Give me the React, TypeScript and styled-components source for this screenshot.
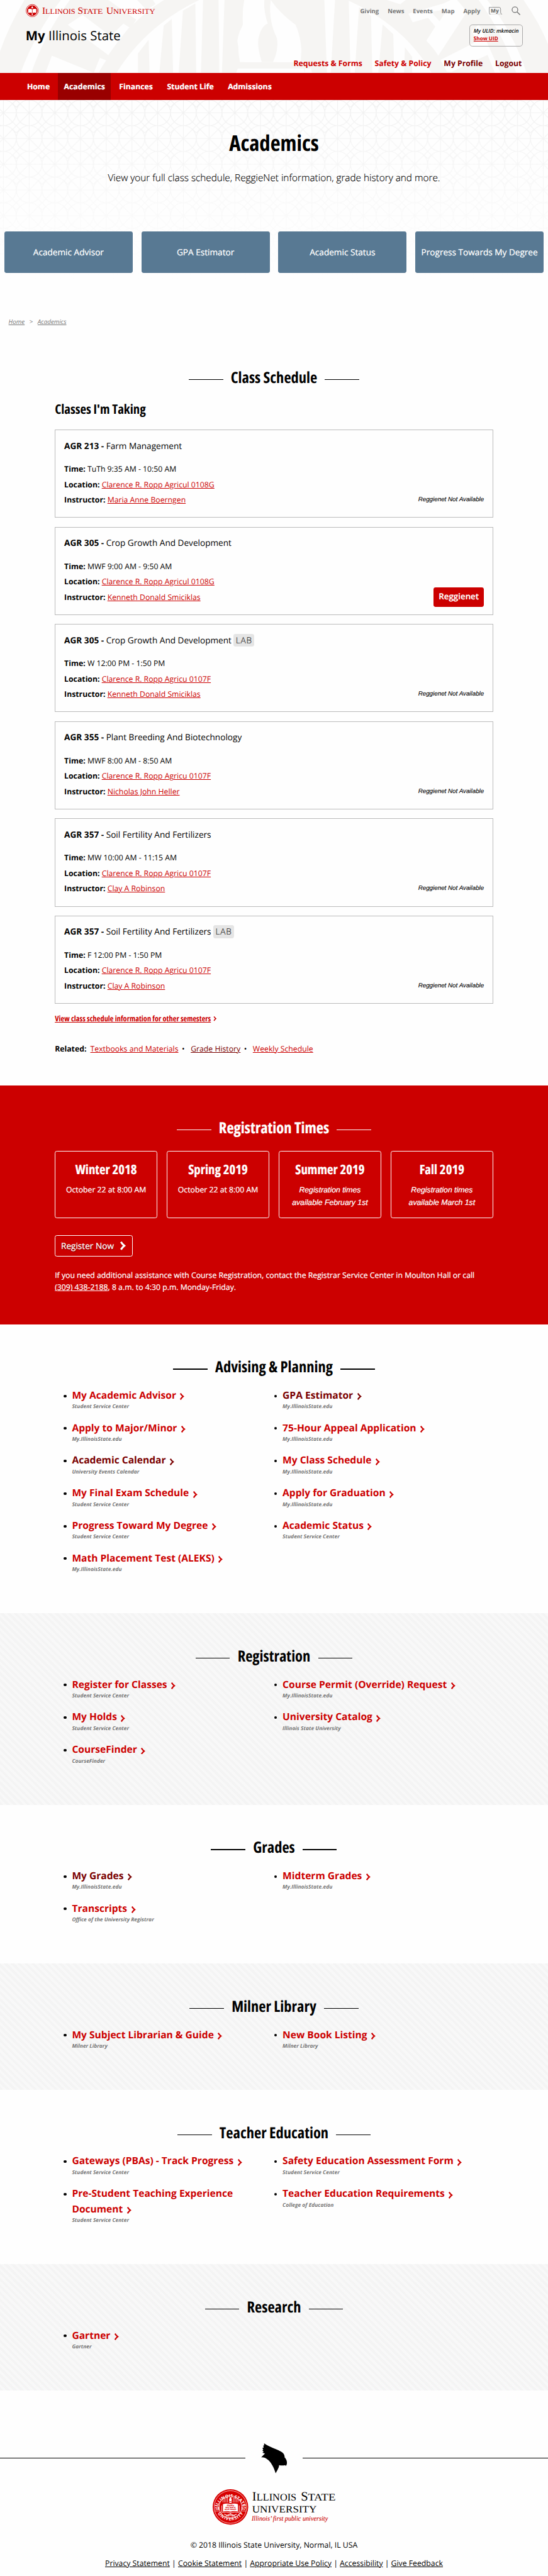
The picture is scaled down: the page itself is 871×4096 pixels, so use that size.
import React from "react";
import styled, { createGlobalStyle, css } from "styled-components";

const RED = "#cc0000";
const VISITED = "#7a0000";

const GlobalStyle = createGlobalStyle`
  html, body { margin: 0; padding: 0; background: #fefefe; }
  body { overflow: hidden; }
  * { box-sizing: border-box; }
`;

/* The page is designed on a 1279px grid and shown at a reduced zoom. */
const Page = styled.div`
  zoom: 0.681;
  width: 1279px;
  height: 6014px;
  overflow: hidden;
  background: #fefefe;
  color: #000;
  font-family: "Open Sans", "Liberation Sans", sans-serif;
  font-size: 18px;
  text-rendering: geometricPrecision;
`;

const condensed = css`
  font-weight: 700;
  font-stretch: 75%;
`;

/* Light text on a dark ground is thickened slightly. */
const onDark = css`
  -webkit-text-stroke: 0.35px currentColor;
`;

const Link = styled.a<{ $visited?: boolean }>`
  color: ${(p) => (p.$visited ? VISITED : RED)};
  text-decoration: underline;
  text-decoration-thickness: 1px;
  text-underline-offset: 2px;
`;

/* ---------- header ---------- */

const Header = styled.header`
  position: relative;
  height: 170px;
  padding: 0 59px 0 60px;
`;
const Backdrop = styled.svg`
  position: absolute;
  inset: 0;
  width: 1279px;
  height: 170px;
`;
const HeaderRow = styled.div<{ $h: number; $top?: number }>`
  position: relative;
  display: flex;
  align-items: center;
  justify-content: space-between;
  height: ${(p) => p.$h}px;
  padding-top: ${(p) => p.$top || 0}px;
`;
const UtilityNav = styled.nav`
  display: flex;
  align-items: center;
  gap: 20.5px;
  margin-right: 5px;
  font-size: 14px;
  font-weight: 700;
  color: #777;
`;
const SiteName = styled.div`
  font-size: 30px;
  line-height: 40px;
  b { font-weight: 700; }
`;
const UlidBox = styled.div`
  width: 124px;
  height: 50px;
  padding: 5px 0 0 8px;
  border: 1px solid #aaa;
  border-radius: 7px;
  font-size: 12.4px;
  line-height: 18px;
  font-weight: 600;
  white-space: nowrap;
  em { display: block; }
  a { font-weight: 700; font-size: 12px; }
`;
const AccountNav = styled.nav`
  display: flex;
  gap: 29px;
  margin-left: auto;
  padding-right: 2px;
  font-weight: 700;
  line-height: 24px;
`;
const AccountLink = styled.a<{ $visited?: boolean }>`
  color: ${(p) => (p.$visited ? VISITED : RED)};
`;
const MainNav = styled.nav`
  display: flex;
  gap: 5px;
  height: 63px;
  padding-left: 49px;
  background: ${RED};
`;
const MainNavItem = styled.a<{ $active?: boolean }>`
  ${onDark}
  display: flex;
  align-items: center;
  padding: 0 14px;
  background: ${(p) => (p.$active ? "#990000" : "transparent")};
  color: #fff;
  font-weight: 700;
`;

/* ---------- hero ---------- */

const Hero = styled.section`
  position: relative;
  height: 467px;
  padding: 71px 10px 0;
  text-align: center;
`;
const HeroPattern = styled.svg`
  position: absolute;
  inset: 0;
  width: 1279px;
  height: 467px;
`;
const HeroTitle = styled.h1`
  ${condensed}
  position: relative;
  margin: 0;
  font-size: 51px;
  line-height: 62px;
`;
const HeroText = styled.p`
  position: relative;
  margin: 35px 0 110px;
  font-size: 22.5px;
  line-height: 30px;
  font-weight: 300;
  -webkit-text-stroke: 0.2px currentColor;
`;
const QuickLinks = styled.div`
  position: relative;
  display: grid;
  grid-template-columns: repeat(4, 1fr);
  gap: 20px;
`;
const QuickLink = styled.a`
  ${onDark}
  display: flex;
  align-items: center;
  justify-content: center;
  height: 96px;
  padding-bottom: 3px;
  border-radius: 5px;
  background: #587993;
  color: #fff;
  font-size: 20px;
  white-space: nowrap;
`;
const Breadcrumb = styled.div`
  display: flex;
  gap: 11px;
  padding: 41px 20px 0;
  color: #777;
  font-size: 14.4px;
  line-height: 20px;
  a { font-style: italic; text-decoration: underline; text-decoration-thickness: 1px; }
`;

/* ---------- shared ---------- */

const Heading = styled.h2`
  ${condensed}
  display: flex;
  align-items: center;
  justify-content: center;
  gap: 18px;
  margin: 0;
  font-size: 36px;
  line-height: 44px;
  &::before, &::after {
    content: "";
    width: 80px;
    height: 2px;
    margin-top: 8px;
    background: currentColor;
  }
`;

/* ---------- schedule ---------- */

const Schedule = styled.section`
  padding: 99px 128px 72px;
`;
const SubHeading = styled.h3`
  ${condensed}
  margin: 33px 0 26px;
  font-size: 30.6px;
  line-height: 40px;
`;
const CardList = styled.div`
  display: flex;
  flex-direction: column;
  gap: 21px;
`;
const Card = styled.article`
  height: 206px;
  padding: 18.5px 20px 0 20.5px;
  border: 1px solid #bbb;
`;
const CardTitle = styled.div`
  font-size: 20px;
  line-height: 36px;
  margin-bottom: 19px;
`;
const Tag = styled.span`
  display: inline-block;
  margin-left: 5px;
  padding: 0 5px;
  border-radius: 5px;
  background: #e5e5e5;
  color: #222;
  font-weight: 300;
  letter-spacing: 1.2px;
  line-height: 30px;
  -webkit-text-stroke: 0.2px currentColor;
`;
const CardBody = styled.div`
  display: flex;
  align-items: flex-end;
  justify-content: space-between;
  line-height: 36px;
`;
const NotAvailable = styled.em`
  font-family: "Liberation Sans", sans-serif;
  font-size: 14.4px;
  -webkit-text-stroke: 0.15px currentColor;
`;
const ReggienetButton = styled.a`
  ${onDark}
  margin-bottom: -4px;
  padding: 0 12px;
  height: 45px;
  line-height: 42px;
  border-radius: 5px;
  background: ${RED};
  color: #fff;
  font-size: 19.6px;
  font-weight: 600;
`;
const OtherSemesters = styled.a`
  ${condensed}
  display: flex;
  align-items: center;
  gap: 5px;
  margin-top: 23px;
  line-height: 24px;
  font-size: 18.2px;
  color: ${RED};
  span { text-decoration: underline; text-decoration-thickness: 1.5px; }
`;
const Related = styled.div`
  margin-top: 45px;
  line-height: 26px;
  white-space: pre;
  i { font-style: normal; margin: 0 14px 0 8px; }
  b { margin-right: 9px; }
`;

/* ---------- registration times ---------- */

const Times = styled.section`
  ${onDark}
  height: 558px;
  padding: 78px 128px 0;
  background: ${RED};
  color: #fff;
`;
const TermGrid = styled.div`
  display: grid;
  grid-template-columns: repeat(4, 1fr);
  gap: 22px;
  margin: 32px 0 40px;
`;
const Term = styled.div`
  height: 156px;
  padding: 22.5px 5px 0;
  border: 1px solid #fff;
  border-radius: 5px;
  text-align: center;
  line-height: 29.5px;
  em { font-family: "Liberation Sans", sans-serif; white-space: pre-line; }
`;
const TermTitle = styled.div`
  ${condensed}
  margin-bottom: 12px;
  font-size: 30.6px;
  line-height: 40px;
`;
const RegisterButton = styled.a`
  display: flex;
  align-items: center;
  justify-content: space-between;
  width: 182px;
  height: 50px;
  padding: 0 15px 0 13px;
  border: 2px solid #fff;
  border-radius: 5px;
  font-size: 20px;
  text-shadow: 1px 1px 2px rgba(0, 0, 0, 0.5);
  svg { filter: drop-shadow(1px 1px 1px rgba(0, 0, 0, 0.4)); }
`;
const Assistance = styled.p`
  margin: 30px 0 0;
  line-height: 28px;
  white-space: nowrap;
  u { text-decoration-thickness: 1px; }
`;

/* ---------- link lists ---------- */

const LinkSection = styled.section<{ $striped?: boolean }>`
  padding: 79px 128px 71.5px;
  ${(p) =>
    p.$striped &&
    css`
      background: repeating-linear-gradient(
        45deg,
        #f4f4f4 0,
        #f4f4f4 5.65px,
        #f8f8f8 5.65px,
        #f8f8f8 11.3px
      );
    `}
`;
const Columns = styled.div`
  display: grid;
  grid-template-columns: 491.5px 1fr;
  margin-top: 24.5px;
`;
const Item = styled.div`
  display: grid;
  grid-template-columns: 19px 1fr;
  padding: 0 30px 0 21px;
  margin-bottom: 20px;
`;
const Bullet = styled.span`
  width: 6px;
  height: 6px;
  margin-top: 17px;
  border-radius: 50%;
  background: #000;
`;
const ItemTitle = styled.a<{ $visited?: boolean }>`
  display: block;
  color: ${(p) => (p.$visited ? VISITED : RED)};
  font-size: 22.9px;
  line-height: 36px;
  font-weight: 700;
  svg { margin-left: 8px; vertical-align: -3.5px; }
`;
const ItemSource = styled.div`
  color: #777;
  font-size: 12.4px;
  line-height: 20px;
  font-style: italic;
  font-weight: 700;
`;

/* ---------- footer ---------- */

const Footer = styled.footer`
  padding-top: 124px;
  text-align: center;
`;
const FooterRule = styled.div`
  display: grid;
  grid-template-columns: 573px 134px 1fr;
  align-items: center;
  justify-items: center;
  height: 70px;
  &::before, &::after {
    content: "";
    width: 100%;
    border-top: 1px solid #000;
    margin-bottom: 2px;
  }
`;
const FooterLogo = styled.svg`
  display: block;
  margin: 37px auto 33px 496px;
`;
const FooterLine = styled.div`
  line-height: 26px;
  margin-bottom: 16px;
  white-space: pre;
  a { text-decoration: underline; text-decoration-thickness: 1px; }
`;

/* ---------- drawings ---------- */

const SealBackdrop = () => (
  <Backdrop viewBox="0 0 1279 170" preserveAspectRatio="none">
    <path d="M57 0 Q20 62 0 120 V170 H1279 V103 Q1260 55 1222 0Z" fill="#f6f5f3" />
    <g fill="#fefefe">
      <path d="M142 0 Q82 78 48 170 H73 Q105 78 163 0Z" />
      <path d="M158 58 193 35 258 84 288 55 302 64 Q275 96 253 129Z" />
      <path d="M121 130 219 170 233 135 248 141 Q238 155 230 170 H106Z" />
      <path d="M253 0 318 46 311 57 Q345 22 383 0 H357 L363 10 342 23 320 0Z" />
      <path d="M465 0 Q340 60 272 170 H860 Q1005 170 1007 170 Q945 60 810 0Z" />
      <path d="M903 0H947L934 10Z" />
      <path
        fillRule="evenodd"
        d="M953 32 1035 8 1052 0H1067L1090 27 1023 130Q1010 110 995 95L1016 62 999 42 963 52ZM1006 27 1026 50 1043 22Z"
      />
      <path d="M1028 140 1113 97 1101 72 1118 57 1168 170H1155L1138 128 1053 168 1043 167Z" />
      <path d="M1117 0 Q1172 75 1205 170 H1229 Q1198 75 1137 0Z" />
    </g>
    <g fill="#f6f5f3">
      <path d="M322 125 347 93 349 170H322Z" />
      <path d="M382 60 401 44 404 170H372Z" />
      <path d="M427 25 456 8 458 170H417Z" />
      <path d="M474 0H510L512 170H469Z" />
      <path d="M524 0H570Q565 30 567 57 Q550 100 560 145H700Q708 100 700 80 Q690 40 655 0H708L712 0 757 0 763 170H728L726 160H556L552 170H518Z" />
      <path d="M616 0H632Q628 30 636 60Q655 100 648 145H611Q600 110 603 90Q610 60 625 55Q616 30 616 0Z" />
      <path d="M782 0H814L818 170H772Z" />
      <path d="M838 17 866 37 869 170H828Z" />
      <path d="M893 57 918 80 920 170H883Z" />
      <path d="M945 110 962 133V170H943Z" />
    </g>
    <g fill="#fefefe">
      <path d="M571 0H617Q618 35 604 55Q598 85 601 110Q604 130 611 145H571Q556 120 554 95Q558 70 569 57Q564 25 571 0Z" />
      <path d="M632 0Q652 50 690 62Q706 90 702 145H637Q650 120 647 90Q626 50 632 0Z" />
      <path d="M555 160H725L728 170H551Z" />
    </g>
    <path d="M632 0H712V170L704 145Q706 95 690 58Q652 30 632 0Z" fill="#f6f5f3" />
  </Backdrop>
);

const Lattice = () => (
  <HeroPattern>
    <defs>
      <pattern id="lattice" x="38" y="0" width="60" height="60" patternUnits="userSpaceOnUse">
        <g fill="none" stroke="#f1f1f1" strokeWidth="1.8">
          <circle cx="30" cy="30" r="30" />
          <path d="M30 0V60M0 30H60M0 0 60 60M60 0 0 60M0 17 8.5 8.5M60 17 51.5 8.5" />
        </g>
      </pattern>
      <linearGradient id="fade" x1="0" y1="0" x2="0" y2="1">
        <stop offset="0" stopColor="#fefefe" stopOpacity="0" />
        <stop offset="0.9" stopColor="#fefefe" stopOpacity="1" />
      </linearGradient>
    </defs>
    <rect width="1279" height="467" fill="url(#lattice)" />
    <rect width="1279" height="467" fill="url(#fade)" />
  </HeroPattern>
);

const serif = '"Liberation Serif", serif';

const HeaderLogo = () => (
  <svg width="304" height="32" viewBox="0 0 304 32">
    <circle cx="15" cy="16" r="14.3" fill="#fff" stroke={RED} strokeWidth="1.2" />
    <circle cx="15" cy="16" r="12.3" fill={RED} />
    <path d="M5.5 12.5Q10 11 14.4 13V21.5Q10 19.8 5.5 21.2ZM24.5 12.5Q20 11 15.6 13V21.5Q20 19.8 24.5 21.2Z" fill="#fff" />
    <path d="M15 5.5Q18 8.5 16.5 10.8H13.5Q12 8.5 15 5.5ZM14 22.5H16V26.5H14Z" fill="#fff" />
    <g fill={RED} fontFamily={serif}>
      {[
        ["I", "LLINOIS", 38, 45.5, 70],
        ["S", "TATE", 121, 132, 48],
        ["U", "NIVERSITY", 188, 204, 98],
      ].map(([cap, rest, x1, x2, w]) => (
        <React.Fragment key={String(cap)}>
          <text x={x1} y="24" fontSize="22.5">{cap}</text>
          <text x={x2} y="24" fontSize="17" textLength={w} lengthAdjust="spacingAndGlyphs">{rest}</text>
        </React.Fragment>
      ))}
    </g>
  </svg>
);

const MyBubble = () => (
  <svg width="32" height="19" viewBox="0 0 32 19">
    <path d="M1 1H24Q27.5 1 27.5 5V13Q27.5 16 31 18H5Q1 18 1 14Z" fill="none" stroke="#777" strokeWidth="1.2" />
    <text x="4.5" y="12.5" fontSize="12" fontWeight="800" fill="#777">My</text>
  </svg>
);

const SearchIcon = () => (
  <svg width="21" height="21" viewBox="0 0 21 21" fill="none" stroke="#777">
    <circle cx="8" cy="8" r="6.6" strokeWidth="1.9" />
    <path d="M12.8 12.8 20 20" strokeWidth="2.2" />
  </svg>
);

const Chevron = ({ w = 12, h = 16, s = 3 }: { w?: number; h?: number; s?: number }) => (
  <svg width={w} height={h} viewBox="0 0 11 15">
    <path d="M2.3 0.8Q5 5 8.3 7.5Q5 10 2.3 14.2" fill="none" stroke="currentColor" strokeWidth={s} />
  </svg>
);

const Cardinal = () => (
  <svg width="62" height="70" viewBox="0 0 62 70">
    <path d="M7 0C20 10 38 13 49 21C54 25 55 29 55 33C60 38 61 44 60 49L58 53L56 51C52 52 47 52 42 51C42 57 37 64 34 70C30 56 22 42 14 37C10 34 5 32 0 33L9 24L3 22L6 20L3 17L5 15L3 11L6 10L5 5L7 5Z" />
  </svg>
);

const UniversitySeal = () => (
  <FooterLogo width="290" height="84" viewBox="0 0 290 84">
    <defs>
      <path id="arcTop" d="M11.5 44A30.5 30.5 0 0 1 71.5 44" />
      <path id="arcBottom" d="M6.5 44A36 36 0 0 0 77 44" />
    </defs>
    <circle cx="41.5" cy="41.5" r="41.5" fill="#d80000" />
    <circle cx="41.5" cy="41.5" r="38" fill="none" stroke="#fff" strokeWidth="1" />
    <circle cx="41.5" cy="41.5" r="26.5" fill="#d80000" stroke="#fff" strokeWidth="1.2" />
    <g fill="#fff" fontWeight="700" fontSize="10">
      <text><textPath href="#arcTop" startOffset="50%" textAnchor="middle" textLength="78">ILLINOIS STATE</textPath></text>
      <text><textPath href="#arcBottom" startOffset="50%" textAnchor="middle" textLength="70">UNIVERSITY</textPath></text>
      <text x="5" y="48.5" textLength="11" lengthAdjust="spacingAndGlyphs">18</text>
      <text x="67" y="48.5" textLength="11" lengthAdjust="spacingAndGlyphs">57</text>
    </g>
    <path d="M5 38.5H15M5 51H15M68 38.5H78M68 51H78" stroke="#fff" strokeWidth="1" />
    <path d="M24 31V22M27.5 31V20M31 31V18M34.5 31V18M48.5 31V18M52 31V18M55.5 31V20M59 31V22" stroke="#fff" strokeWidth="1" />
    <path d="M41.5 18Q46 23 44 28H39Q37 23 41.5 18ZM37 29H46L43 32H40Z" fill="#fff" />
    <path d="M24 35Q33 32 41.5 35Q50 32 59 35V52Q50 49.5 41.5 52.5Q33 49.5 24 52Z" fill="#fff" />
    <path d="M21 38V54Q32 52 41.5 55Q51 52 62 54V38" fill="none" stroke="#fff" strokeWidth="1.2" />
    <path d="M27 58Q34 63 40 58M56 58Q49 63 43 58M41.5 55V62M31 62Q36 64 40 61M52 62Q47 64 43 61" fill="none" stroke="#fff" strokeWidth="1.5" />
    <g fill="#d80000" fontWeight="700" fontSize="5.5" textAnchor="middle">
      <text x="41.5" y="39">Gladly</text>
      <text x="41.5" y="44">we learn</text>
      <text x="41.5" y="49">and teach</text>
    </g>
    <g fontFamily={serif}>
      <text x="92" y="26" fontSize="30">I</text>
      <text x="102.5" y="26" fontSize="23.5" textLength="93" lengthAdjust="spacingAndGlyphs">LLINOIS</text>
      <text x="206" y="26" fontSize="30">S</text>
      <text x="222" y="26" fontSize="23.5" textLength="65" lengthAdjust="spacingAndGlyphs">TATE</text>
      <text x="92" y="54.5" fontSize="23" textLength="151" lengthAdjust="spacingAndGlyphs">UNIVERSITY</text>
      <text x="91" y="74" fontSize="16" fontStyle="italic" fill={RED} stroke={RED} strokeWidth="0.2" textLength="178" lengthAdjust="spacingAndGlyphs">
        Illinois’ first public university
      </text>
    </g>
  </FooterLogo>
);

/* ---------- data ---------- */

type Course = {
  code: string;
  name: string;
  lab?: boolean;
  time: string;
  place: string;
  teacher: string;
  reggienet?: boolean;
};
const courses: Course[] = [
  { code: "AGR 213", name: "Farm Management", time: "TuTh 9:35 AM - 10:50 AM", place: "Clarence R. Ropp Agricul 0108G", teacher: "Maria Anne Boerngen" },
  { code: "AGR 305", name: "Crop Growth And Development", time: "MWF 9:00 AM - 9:50 AM", place: "Clarence R. Ropp Agricul 0108G", teacher: "Kenneth Donald Smiciklas", reggienet: true },
  { code: "AGR 305", name: "Crop Growth And Development", lab: true, time: "W 12:00 PM - 1:50 PM", place: "Clarence R. Ropp Agricu 0107F", teacher: "Kenneth Donald Smiciklas" },
  { code: "AGR 355", name: "Plant Breeding And Biotechnology", time: "MWF 8:00 AM - 8:50 AM", place: "Clarence R. Ropp Agricu 0107F", teacher: "Nicholas John Heller" },
  { code: "AGR 357", name: "Soil Fertility And Fertilizers", time: "MW 10:00 AM - 11:15 AM", place: "Clarence R. Ropp Agricu 0107F", teacher: "Clay A Robinson" },
  { code: "AGR 357", name: "Soil Fertility And Fertilizers", lab: true, time: "F 12:00 PM - 1:50 PM", place: "Clarence R. Ropp Agricu 0107F", teacher: "Clay A Robinson" },
];

const SSC = "Student Service Center";
const MY = "My.IllinoisState.edu";
type Entry = [title: string, source: string, visited?: boolean];
const linkSections: { title: string; left: Entry[]; right: Entry[] }[] = [
  {
    title: "Advising & Planning",
    left: [
      ["My Academic Advisor", SSC],
      ["Apply to Major/Minor", MY],
      ["Academic Calendar", "University Events Calendar", true],
      ["My Final Exam Schedule", SSC],
      ["Progress Toward My Degree", SSC],
      ["Math Placement Test (ALEKS)", MY],
    ],
    right: [
      ["GPA Estimator", MY, true],
      ["75-Hour Appeal Application", MY],
      ["My Class Schedule", MY],
      ["Apply for Graduation", MY],
      ["Academic Status", SSC],
    ],
  },
  {
    title: "Registration",
    left: [["Register for Classes", SSC], ["My Holds", SSC], ["CourseFinder", "CourseFinder"]],
    right: [["Course Permit (Override) Request", MY], ["University Catalog", "Illinois State University"]],
  },
  {
    title: "Grades",
    left: [["My Grades", MY, true], ["Transcripts", "Office of the University Registrar"]],
    right: [["Midterm Grades", MY]],
  },
  {
    title: "Milner Library",
    left: [["My Subject Librarian & Guide", "Milner Library"]],
    right: [["New Book Listing", "Milner Library"]],
  },
  {
    title: "Teacher Education",
    left: [["Gateways (PBAs) - Track Progress", SSC], ["Pre-Student Teaching Experience Document", SSC]],
    right: [["Safety Education Assessment Form", SSC], ["Teacher Education Requirements", "College of Education"]],
  },
  { title: "Research", left: [["Gartner", "Gartner"]], right: [] },
];

const EntryList = ({ entries }: { entries: Entry[] }) => (
  <div>
    {entries.map(([title, source, visited]) => (
      <Item key={title}>
        <Bullet />
        <div>
          <ItemTitle $visited={visited}>
            {title}
            <Chevron />
          </ItemTitle>
          <ItemSource>{source}</ItemSource>
        </div>
      </Item>
    ))}
  </div>
);

const footerLinks = ["Privacy Statement", "Cookie Statement", "Appropriate Use Policy", "Accessibility", "Give Feedback"];

export default function App() {
  return (
    <Page>
      <GlobalStyle />
      <Header>
        <SealBackdrop />
        <HeaderRow $h={50}>
          <HeaderLogo />
          <UtilityNav>
            <span>Giving</span>
            <span>News</span>
            <span>Events</span>
            <span>Map</span>
            <span>Apply</span>
            <MyBubble />
            <SearchIcon />
          </UtilityNav>
        </HeaderRow>
        <HeaderRow $h={66}>
          <SiteName>
            <b>My</b> Illinois State
          </SiteName>
          <UlidBox>
            <em>My ULID: mkmacin</em>
            <Link>Show UID</Link>
          </UlidBox>
        </HeaderRow>
        <HeaderRow $h={54} $top={12}>
          <AccountNav>
            <AccountLink>Requests &amp; Forms</AccountLink>
            <AccountLink>Safety &amp; Policy</AccountLink>
            <AccountLink $visited>My Profile</AccountLink>
            <AccountLink $visited>Logout</AccountLink>
          </AccountNav>
        </HeaderRow>
      </Header>
      <MainNav>
        {["Home", "Academics", "Finances", "Student Life", "Admissions"].map((label) => (
          <MainNavItem key={label} $active={label === "Academics"}>
            {label}
          </MainNavItem>
        ))}
      </MainNav>
      <Hero>
        <Lattice />
        <HeroTitle>Academics</HeroTitle>
        <HeroText>View your full class schedule, ReggieNet information, grade history and more.</HeroText>
        <QuickLinks>
          <QuickLink>Academic Advisor</QuickLink>
          <QuickLink>GPA Estimator</QuickLink>
          <QuickLink>Academic Status</QuickLink>
          <QuickLink>Progress Towards My Degree</QuickLink>
        </QuickLinks>
      </Hero>
      <Breadcrumb>
        <a>Home</a>
        <span>&gt;</span>
        <a>Academics</a>
      </Breadcrumb>
      <Schedule>
        <Heading>Class Schedule</Heading>
        <SubHeading>Classes I'm Taking</SubHeading>
        <CardList>
          {courses.map((c, i) => (
            <Card key={i}>
              <CardTitle>
                <b>{c.code} -</b> {c.name}
                {c.lab && <Tag>LAB</Tag>}
              </CardTitle>
              <CardBody>
                <div>
                  <div><b>Time:</b> {c.time}</div>
                  <div><b>Location:</b> <Link>{c.place}</Link></div>
                  <div><b>Instructor:</b> <Link>{c.teacher}</Link></div>
                </div>
                {c.reggienet ? (
                  <ReggienetButton>Reggienet</ReggienetButton>
                ) : (
                  <NotAvailable>Reggienet Not Available</NotAvailable>
                )}
              </CardBody>
            </Card>
          ))}
        </CardList>
        <OtherSemesters>
          <span>View class schedule information for other semesters</span>
          <Chevron w={8} h={11} s={3.2} />
        </OtherSemesters>
        <Related>
          <b>Related:</b>
          <Link>Textbooks and Materials</Link>
          <i>•</i>
          <Link $visited>Grade History</Link>
          <i>•</i>
          <Link>Weekly Schedule</Link>
        </Related>
      </Schedule>
      <Times>
        <Heading>Registration Times</Heading>
        <TermGrid>
          <Term><TermTitle>Winter 2018</TermTitle>October 22 at 8:00 AM</Term>
          <Term><TermTitle>Spring 2019</TermTitle>October 22 at 8:00 AM</Term>
          <Term><TermTitle>Summer 2019</TermTitle><em>{"Registration times\navailable February 1st"}</em></Term>
          <Term><TermTitle>Fall 2019</TermTitle><em>{"Registration times\navailable March 1st"}</em></Term>
        </TermGrid>
        <RegisterButton>
          Register Now
          <Chevron w={15} h={20} s={3.4} />
        </RegisterButton>
        <Assistance>
          If you need additional assistance with Course Registration, contact the Registrar Service Center in Moulton Hall or call
          <br />
          <u>(309) 438-2188</u>, 8 a.m. to 4:30 p.m. Monday-Friday.
        </Assistance>
      </Times>
      {linkSections.map((s, i) => (
        <LinkSection key={s.title} $striped={i % 2 === 1}>
          <Heading>{s.title}</Heading>
          <Columns>
            <EntryList entries={s.left} />
            <EntryList entries={s.right} />
          </Columns>
        </LinkSection>
      ))}
      <Footer>
        <FooterRule>
          <Cardinal />
        </FooterRule>
        <UniversitySeal />
        <FooterLine>© 2018 Illinois State University, Normal, IL USA</FooterLine>
        <FooterLine>
          {footerLinks.map((label, i) => (
            <React.Fragment key={label}>
              {i > 0 && " | "}
              <a>{label}</a>
            </React.Fragment>
          ))}
        </FooterLine>
      </Footer>
    </Page>
  );
}
